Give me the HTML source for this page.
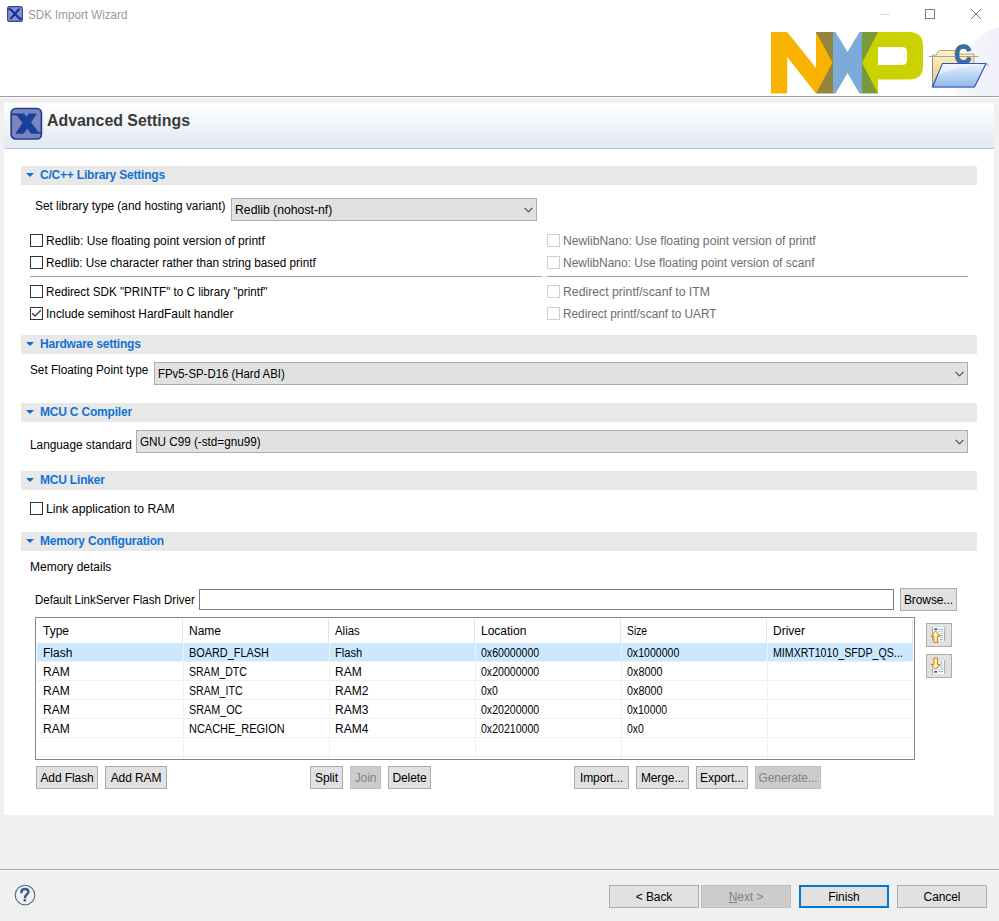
<!DOCTYPE html>
<html><head><meta charset="utf-8">
<style>
*{margin:0;padding:0;box-sizing:border-box}
html,body{width:999px;height:921px;overflow:hidden;background:#f0f0f0;font-family:"Liberation Sans",sans-serif;font-size:12px;color:#000}
.a{position:absolute}
.t{position:absolute;white-space:pre;line-height:14px}
#top{left:0;top:0;width:999px;height:96px;background:#fff}
#sep1{left:0;top:96px;width:999px;height:1px;background:#a0a0a0}
#sep1b{left:0;top:97px;width:999px;height:1px;background:#fcfcfc}
#hdr{left:4px;top:103px;width:990px;height:45px;background:linear-gradient(#ffffff,#e2e8f1)}
#hdrl{left:4px;top:148px;width:990px;height:1px;background:#b6c9df}
#content{left:4px;top:149px;width:990px;height:666px;background:#fff}
.bar{position:absolute;left:21px;width:956px;height:19px;background:#e8e8e8;border-top-left-radius:1.5px;border-top-right-radius:1.5px}
.bar .tri{position:absolute;left:5px;top:7px;width:0;height:0;border-left:4px solid transparent;border-right:4px solid transparent;border-top:4px solid #0a6fd6}
.bar .bt{position:absolute;left:19px;top:2px;white-space:pre;font-weight:bold;color:#1372d3;font-size:12px;line-height:14px;letter-spacing:-0.2px}
.cb{position:absolute;width:13px;height:13px;border:1px solid #333;background:#fff}
.cbd{position:absolute;width:13px;height:13px;border:1px solid #cfcfcf;background:#fff}
.dis{color:#6d6d6d}
.combo{position:absolute;height:23px;background:#e1e1e1;border:1px solid #adadad}
.combo .ct{position:absolute;left:3px;top:4px;white-space:pre;line-height:14px}
.combo svg{position:absolute;right:3.5px;top:8px}
.btn{position:absolute;height:23px;background:#e1e1e1;border:1px solid #adadad;text-align:center;line-height:23px;white-space:pre;letter-spacing:-0.1px}
.btnd{background:#cccccc;border-color:#bfbfbf;color:#838383}
.sep{position:absolute;height:1px;background:#a0a0a0}
</style></head><body>
<div class="a" id="top"></div>
<div class="a" id="sep1"></div>
<div class="a" id="sep1b"></div>
<div class="a" id="hdr"></div>
<div class="a" id="hdrl"></div>
<div class="a" id="content"></div>

<!-- logo -->
<svg class="a" style="left:0;top:0" width="999" height="96" viewBox="0 0 999 96">
<defs>
<linearGradient id="swg" x1="0" y1="0" x2="1" y2="0.3"><stop offset="0" stop-color="#f6f7fb"/><stop offset="1" stop-color="#dfe2f2"/></linearGradient><radialGradient id="sw" cx="1040" cy="40" r="90" gradientUnits="userSpaceOnUse"><stop offset="0.55" stop-color="#dfe3f4"/><stop offset="1" stop-color="#ffffff" stop-opacity="0"/></radialGradient>
<linearGradient id="fb" x1="0" y1="0" x2="0" y2="1"><stop offset="0" stop-color="#eaf4ff"/><stop offset="1" stop-color="#8db8ea"/></linearGradient>
<linearGradient id="fy" x1="0" y1="0" x2="0" y2="1"><stop offset="0" stop-color="#fdf3d0"/><stop offset="1" stop-color="#f2c75c"/></linearGradient>
</defs>
<path d="M999 27 C985 30 972 42 968 52 C964 66 962 80 955 96 L999 96 Z" fill="url(#swg)" opacity="0.5"/>
<rect x="816" y="32" width="17" height="61.5" fill="#938540"/>
<polygon fill="#f9b200" points="771,32 787.2,32 816,68 816,32 832.5,62.7 816,93.5 787.2,57 787.2,93.5 771,93.5"/>
<polygon fill="#7aabd9" points="833,32 835.5,32 847.5,52 859.5,32 862,32 862,93.5 859.5,93.5 847.5,73 835.5,93.5 833,93.5"/>
<rect x="862" y="32" width="16" height="61.5" fill="#7a993c"/>
<polygon fill="#cad200" points="862,62.7 878,32 878,93.5"/>
<path fill="#cad200" fill-rule="evenodd" d="M878 32 H909 Q923 32 923 46 V66 Q923 79.5 909 79.5 H878 Z M878 47 V65 H902 Q907 65 907 60 V52 Q907 47 902 47 Z"/>
<!-- folder -->
<path d="M932.5 55 H936.5 Q937.5 50.5 941 50.5 H954 Q956 50.5 957 54 H974 V87 H932.5 Z" fill="url(#fy)" stroke="#b8955a" stroke-width="0.9"/>
<path d="M932.5 55 V87" stroke="#8a86c0" stroke-width="1"/>
<path d="M929 56.5 H978.5" stroke="#9c9aa6" stroke-width="0.9"/>
<text x="0" y="0" transform="translate(954.3 63.8) scale(0.86 1)" font-family="Liberation Sans" font-weight="bold" font-size="27.5" fill="#3a6ea6" stroke="#3a6ea6" stroke-width="1.3">C</text>
<path d="M942.5 63.5 H986 L974.5 87 H932.5 Z" fill="url(#fb)" stroke="#3050cc" stroke-width="1.2"/>
<path d="M942.8 64.2 H985.3 C968 65 950 68 937.8 75.5 Z" fill="#ffffff" opacity="0.45"/>
<path d="M986 64 L989 66" stroke="#a0a0a0" stroke-width="1"/>
</svg>
<!-- title icon -->
<svg class="a" style="left:7px;top:6px" width="16" height="16" viewBox="0 0 16 16">
<rect x="0.6" y="0.6" width="14.8" height="14.8" rx="2" fill="#8a8fcb" stroke="#2c47a0" stroke-width="1.1"/>
<path d="M1.2 3.3 H3.5 L12.5 12.6 H14.8" fill="none" stroke="#0f3595" stroke-width="2.1"/>
<path d="M12 3.3 L3.8 12.5" fill="none" stroke="#0f3595" stroke-width="2.1" stroke-linecap="round"/>
</svg>
<!-- window controls -->
<div class="a" style="left:880px;top:14px;width:10px;height:1px;background:#dadada"></div>
<div class="a" style="left:925px;top:9px;width:10px;height:10px;border:1px solid #7a7a7a"></div>
<svg class="a" style="left:970px;top:8px" width="12" height="12" viewBox="0 0 12 12"><path d="M1 1 L11 11 M11 1 L1 11" stroke="#7c7c7c" stroke-width="1"/></svg>
<!-- header icon -->
<svg class="a" style="left:10px;top:107px" width="33" height="33" viewBox="0 0 33 33">
<rect x="1.2" y="1.5" width="30.2" height="30.5" rx="4.5" fill="#7c84bf" stroke="#1c3f95" stroke-width="1.7"/>
<polygon fill="#16409a" points="1.5,6.4 14,6.4 28.5,25 30.8,25 30.8,26.8 21.2,26.8 6.5,8.3 1.5,8.3"/>
<polygon fill="#16409a" points="18.8,6.4 26.9,6.4 13.7,26.8 5.3,26.8"/>
</svg>
<!-- help icon -->
<svg class="a" style="left:14px;top:884px" width="22" height="22" viewBox="0 0 22 22">
<circle cx="11" cy="11" r="9.8" fill="#f0f0f0" stroke="#4a6590" stroke-width="1.1"/>
<path d="M7.4 8.2 C7.4 5.8 9 4.9 11 4.9 C13.2 4.9 14.4 6.2 14.4 7.8 C14.4 9.9 11.6 10.6 11.2 12.6 L11.1 13.3" fill="none" stroke="#415c88" stroke-width="2.5" stroke-linecap="round"/>
<circle cx="10.8" cy="16.3" r="1.35" fill="#415c88"/>
</svg>
<!-- up/down buttons -->
<div class="btn" style="left:926px;top:623px;width:26px;height:24px"></div>
<div class="btn" style="left:926px;top:654px;width:26px;height:24px"></div>
<svg class="a" style="left:926px;top:623px" width="26" height="24" viewBox="0 0 26 24">
<defs><linearGradient id="ag" x1="0" y1="0" x2="1" y2="0"><stop offset="0" stop-color="#f7d36a"/><stop offset="0.45" stop-color="#fff6c8"/><stop offset="1" stop-color="#f3c44a"/></linearGradient>
<linearGradient id="lb" x1="0" y1="0" x2="0" y2="1"><stop offset="0" stop-color="#c8b66a"/><stop offset="1" stop-color="#8a9cc0"/></linearGradient>
<linearGradient id="lb2" x1="0" y1="1" x2="0" y2="0"><stop offset="0" stop-color="#c8b66a"/><stop offset="1" stop-color="#8a9cc0"/></linearGradient></defs>
<rect x="7" y="4" width="11" height="13.5" fill="#f4f8fe"/>
<rect x="6" y="4" width="1" height="13.5" fill="url(#lb)"/>
<rect x="18.2" y="4" width="1" height="13.5" fill="url(#lb)"/>
<rect x="8.3" y="5.4" width="2.8" height="1.7" fill="#2f5a9a"/>
<path d="M12.2 6.6 H17 M12.5 8.6 H13.8 M15.2 8.6 H16.6 M14.5 10.5 H16.8 M14.5 12.4 H16.8 M14.8 14.5 H16.6 M14 16.5 H16.8" stroke="#9aaacb" stroke-width="0.9"/>
<path d="M9.7 8 L14.2 13.2 H11.6 V19.6 H7.9 V13.2 H5.2 Z" fill="url(#ag)" stroke="#c5850f" stroke-width="1" stroke-linejoin="round"/>
</svg>
<svg class="a" style="left:926px;top:654px" width="26" height="24" viewBox="0 0 26 24">
<rect x="7" y="6.5" width="11" height="13.5" fill="#f4f8fe"/>
<rect x="6" y="14" width="1" height="6.5" fill="url(#lb2)"/>
<rect x="18.2" y="6.5" width="1" height="13.5" fill="url(#lb2)"/>
<rect x="8.3" y="17" width="2.8" height="1.7" fill="#2f5a9a"/>
<path d="M12.2 17.6 H17 M12.5 15.6 H13.8 M15.2 15.6 H16.6 M14.5 13.7 H16.8 M14.5 11.8 H16.8 M14.8 9.8 H16.6 M14 7.8 H16.8" stroke="#9aaacb" stroke-width="0.9"/>
<path d="M7.9 4 H11.6 V10.4 H14.2 L9.7 15.6 L5.2 10.4 H7.9 Z" fill="url(#ag)" stroke="#c5850f" stroke-width="1" stroke-linejoin="round"/>
</svg>

<!-- title bar -->
<div class="t" style="transform:scaleX(0.968);transform-origin:0 0;left:28px;top:8px;color:#999;font-size:12px">SDK Import Wizard</div>

<!-- header -->
<div class="t" style="transform:scaleX(0.993);transform-origin:0 0;left:47px;top:112px;font-size:16px;font-weight:bold;color:#3a3a3a;line-height:18px">Advanced Settings</div>

<!-- sections -->
<div class="bar" style="top:166px"><div class="tri"></div><div class="bt">C/C++ Library Settings</div></div>
<div class="t" style="transform:scaleX(0.988);transform-origin:0 0;left:35px;top:199px">Set library type (and hosting variant)</div>
<div class="combo" style="left:231px;top:198px;width:306px"><div class="ct" style="transform:scaleX(1.02);transform-origin:0 0">Redlib (nohost-nf)</div><svg width="9" height="6" viewBox="0 0 9 6"><path d="M0.5 0.8 L4.5 4.8 L8.5 0.8" fill="none" stroke="#404040" stroke-width="1.1"/></svg></div>

<div class="cb" style="left:30px;top:234px"></div><div class="t" style="left:46px;top:234px">Redlib: Use floating point version of printf</div>
<div class="cb" style="left:30px;top:256px"></div><div class="t" style="transform:scaleX(0.979);transform-origin:0 0;left:46px;top:256px">Redlib: Use character rather than string based printf</div>
<div class="sep" style="left:30px;top:276px;width:512px"></div>
<div class="cb" style="left:30px;top:285px"></div><div class="t" style="transform:scaleX(0.972);transform-origin:0 0;left:46px;top:285px">Redirect SDK "PRINTF" to C library "printf"</div>
<div class="cb" style="left:30px;top:307px"><svg class="a" style="left:0;top:0" width="11" height="11" viewBox="0 0 11 11"><path d="M1.2 5.3 L4 8.1 L9.8 2.3" fill="none" stroke="#333" stroke-width="1.3"/></svg></div><div class="t" style="transform:scaleX(0.989);transform-origin:0 0;left:46px;top:307px">Include semihost HardFault handler</div>

<div class="cbd" style="left:547px;top:234px"></div><div class="t dis" style="transform:scaleX(1.013);transform-origin:0 0;left:563px;top:234px">NewlibNano: Use floating point version of printf</div>
<div class="cbd" style="left:547px;top:256px"></div><div class="t dis" style="left:563px;top:256px">NewlibNano: Use floating point version of scanf</div>
<div class="sep" style="left:547px;top:276px;width:421px"></div>
<div class="cbd" style="left:547px;top:285px"></div><div class="t dis" style="transform:scaleX(1.02);transform-origin:0 0;left:563px;top:285px">Redirect printf/scanf to ITM</div>
<div class="cbd" style="left:547px;top:307px"></div><div class="t dis" style="transform:scaleX(0.985);transform-origin:0 0;left:563px;top:307px">Redirect printf/scanf to UART</div>

<div class="bar" style="top:335px"><div class="tri"></div><div class="bt">Hardware settings</div></div>
<div class="t" style="transform:scaleX(0.98);transform-origin:0 0;left:30px;top:363px">Set Floating Point type</div>
<div class="combo" style="left:154px;top:362px;width:814px"><div class="ct" style="transform:scaleX(0.95);transform-origin:0 0">FPv5-SP-D16 (Hard ABI)</div><svg width="9" height="6" viewBox="0 0 9 6"><path d="M0.5 0.8 L4.5 4.8 L8.5 0.8" fill="none" stroke="#404040" stroke-width="1.1"/></svg></div>

<div class="bar" style="top:403px"><div class="tri"></div><div class="bt">MCU C Compiler</div></div>
<div class="t" style="transform:scaleX(0.985);transform-origin:0 0;left:30px;top:438px">Language standard</div>
<div class="combo" style="left:136px;top:430px;width:832px"><div class="ct" style="transform:scaleX(0.975);transform-origin:0 0">GNU C99 (-std=gnu99)</div><svg width="9" height="6" viewBox="0 0 9 6"><path d="M0.5 0.8 L4.5 4.8 L8.5 0.8" fill="none" stroke="#404040" stroke-width="1.1"/></svg></div>

<div class="bar" style="top:471px"><div class="tri"></div><div class="bt">MCU Linker</div></div>
<div class="cb" style="left:30px;top:502px"></div><div class="t" style="transform:scaleX(1.02);transform-origin:0 0;left:46px;top:502px">Link application to RAM</div>

<div class="bar" style="top:532px"><div class="tri"></div><div class="bt">Memory Configuration</div></div>
<div class="t" style="left:30px;top:560px">Memory details</div>
<div class="t" style="transform:scaleX(0.958);transform-origin:0 0;left:35px;top:593px">Default LinkServer Flash Driver</div>
<div class="a" style="left:199px;top:589px;width:695px;height:21px;border:1px solid #7a7a7a;background:#fff"></div>
<div class="btn" style="left:900px;top:588px;width:57px">Browse...</div>

<!-- table -->
<div class="a" style="left:35px;top:617px;width:880px;height:143px;border:1px solid #828790;background:#fff"></div>
<div class="a" style="left:37px;top:643px;width:876px;height:18px;background:#cce8ff"></div>
<div class="a" style="left:182px;top:619px;width:1px;height:24px;background:#e5e5e5"></div>
<div class="a" style="left:328px;top:619px;width:1px;height:24px;background:#e5e5e5"></div>
<div class="a" style="left:474px;top:619px;width:1px;height:24px;background:#e5e5e5"></div>
<div class="a" style="left:620px;top:619px;width:1px;height:24px;background:#e5e5e5"></div>
<div class="a" style="left:766px;top:619px;width:1px;height:24px;background:#e5e5e5"></div>
<div class="a" style="left:912px;top:619px;width:1px;height:24px;background:#e5e5e5"></div>
<div class="a" style="left:183px;top:643px;width:1px;height:116px;background:#f0f0f0"></div>
<div class="a" style="left:329px;top:643px;width:1px;height:116px;background:#f0f0f0"></div>
<div class="a" style="left:475px;top:643px;width:1px;height:116px;background:#f0f0f0"></div>
<div class="a" style="left:621px;top:643px;width:1px;height:116px;background:#f0f0f0"></div>
<div class="a" style="left:767px;top:643px;width:1px;height:116px;background:#f0f0f0"></div>
<div class="a" style="left:37px;top:661px;width:876px;height:1px;background:#f0f0f0"></div>
<div class="a" style="left:37px;top:680px;width:876px;height:1px;background:#f0f0f0"></div>
<div class="a" style="left:37px;top:699px;width:876px;height:1px;background:#f0f0f0"></div>
<div class="a" style="left:37px;top:718px;width:876px;height:1px;background:#f0f0f0"></div>
<div class="a" style="left:37px;top:737px;width:876px;height:1px;background:#f0f0f0"></div>
<div class="a" style="left:37px;top:756px;width:876px;height:1px;background:#f0f0f0"></div>
<div class="t" style="left:43px;top:624px">Type</div>
<div class="t" style="left:189px;top:624px">Name</div>
<div class="t" style="transform:scaleX(0.95);transform-origin:0 0;left:335px;top:624px">Alias</div>
<div class="t" style="left:481px;top:624px">Location</div>
<div class="t" style="transform:scaleX(0.86);transform-origin:0 0;left:627px;top:624px">Size</div>
<div class="t" style="left:773px;top:624px">Driver</div>
<div class="t" style="left:43px;top:646px">Flash</div>
<div class="t" style="transform:scaleX(0.907);transform-origin:0 0;left:189px;top:646px">BOARD_FLASH</div>
<div class="t" style="transform:scaleX(0.93);transform-origin:0 0;left:335px;top:646px">Flash</div>
<div class="t" style="transform:scaleX(0.88);transform-origin:0 0;left:481px;top:646px">0x60000000</div>
<div class="t" style="transform:scaleX(0.88);transform-origin:0 0;left:627px;top:646px">0x1000000</div>
<div class="t" style="left:773px;top:646px;transform:scaleX(0.885);transform-origin:0 0">MIMXRT1010_SFDP_QS...</div>
<div class="t" style="left:43px;top:665px">RAM</div>
<div class="t" style="transform:scaleX(0.877);transform-origin:0 0;left:189px;top:665px">SRAM_DTC</div>
<div class="t" style="left:335px;top:665px">RAM</div>
<div class="t" style="transform:scaleX(0.88);transform-origin:0 0;left:481px;top:665px">0x20000000</div>
<div class="t" style="transform:scaleX(0.9);transform-origin:0 0;left:627px;top:665px">0x8000</div>
<div class="t" style="left:43px;top:684px">RAM</div>
<div class="t" style="transform:scaleX(0.883);transform-origin:0 0;left:189px;top:684px">SRAM_ITC</div>
<div class="t" style="left:335px;top:684px">RAM2</div>
<div class="t" style="transform:scaleX(0.87);transform-origin:0 0;left:481px;top:684px">0x0</div>
<div class="t" style="transform:scaleX(0.9);transform-origin:0 0;left:627px;top:684px">0x8000</div>
<div class="t" style="left:43px;top:703px">RAM</div>
<div class="t" style="transform:scaleX(0.898);transform-origin:0 0;left:189px;top:703px">SRAM_OC</div>
<div class="t" style="left:335px;top:703px">RAM3</div>
<div class="t" style="transform:scaleX(0.88);transform-origin:0 0;left:481px;top:703px">0x20200000</div>
<div class="t" style="transform:scaleX(0.87);transform-origin:0 0;left:627px;top:703px">0x10000</div>
<div class="t" style="left:43px;top:722px">RAM</div>
<div class="t" style="transform:scaleX(0.913);transform-origin:0 0;left:189px;top:722px">NCACHE_REGION</div>
<div class="t" style="left:335px;top:722px">RAM4</div>
<div class="t" style="transform:scaleX(0.88);transform-origin:0 0;left:481px;top:722px">0x20210000</div>
<div class="t" style="transform:scaleX(0.87);transform-origin:0 0;left:627px;top:722px">0x0</div>
<!-- buttons -->
<div class="btn" style="left:36px;top:766px;width:62px">Add Flash</div>
<div class="btn" style="left:105px;top:766px;width:62px">Add RAM</div>
<div class="btn" style="left:310px;top:766px;width:33px">Split</div>
<div class="btn btnd" style="left:350px;top:766px;width:31px">Join</div>
<div class="btn" style="left:388px;top:766px;width:43px">Delete</div>
<div class="btn" style="left:574px;top:766px;width:55px">Import...</div>
<div class="btn" style="left:636px;top:766px;width:53px">Merge...</div>
<div class="btn" style="left:696px;top:766px;width:52px">Export...</div>
<div class="btn btnd" style="left:755px;top:766px;width:66px">Generate...</div>

<!-- bottom -->
<div class="sep" style="left:0;top:869px;width:999px"></div><div class="a" style="left:0;top:870px;width:999px;height:1px;background:#fff"></div>
<div class="btn" style="left:609px;top:885px;width:90px">&lt; Back</div>
<div class="btn btnd" style="left:701px;top:885px;width:90px"><u>N</u>ext &gt;</div>
<div class="btn" style="left:799px;top:885px;width:90px;border:2px solid #0078d7;line-height:21px">Finish</div>
<div class="btn" style="left:897px;top:885px;width:90px">Cancel</div>
</body></html>
